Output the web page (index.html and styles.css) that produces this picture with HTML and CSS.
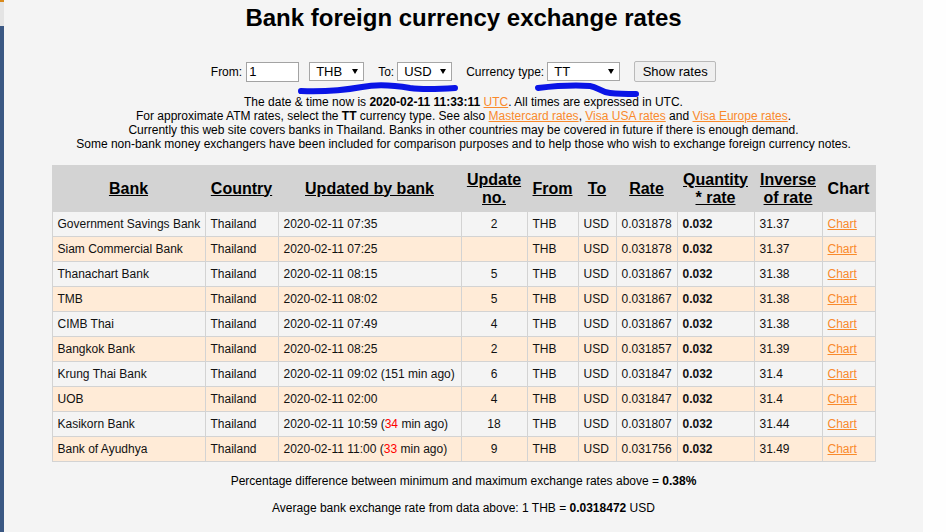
FILE: index.html
```html
<!DOCTYPE html>
<html>
<head>
<meta charset="utf-8">
<title>Bank foreign currency exchange rates</title>
<link rel="stylesheet" href="styles.css">
</head>
<body>
<div class="frame">
  <div class="side"><div class="side-tab"></div></div>
  <main class="page">
    <h1 class="title">Bank foreign currency exchange rates</h1>
    <form class="controls">
      <label class="lbl">From:</label>
      <input class="amount" type="text" value="1">
      <span class="sel sel-thb"><select><option>THB</option></select></span>
      <label class="lbl lbl-to">To:</label>
      <span class="sel sel-usd"><select><option>USD</option></select></span>
      <label class="lbl lbl-type">Currency type:</label>
      <span class="sel sel-tt"><select><option>TT</option></select></span>
      <button class="btn" type="button">Show rates</button>
    </form>
    <svg class="scribble" viewBox="4 0 919 120" width="919" height="120">
      <path d="M301 91 C 325 92, 345 90, 362 87 C 378 84, 392 85, 410 88 C 425 90, 440 89, 455 88" />
      <path d="M538 88 C 555 86, 575 85, 590 86 C 598 87, 600 92, 610 93 C 620 94, 628 94, 636 94" />
    </svg>
    <div class="notes">
      <p>The date &amp; time now is <b>2020-02-11 11:33:11</b> <a href="#">UTC</a>. All times are expressed in UTC.</p>
      <p>For approximate ATM rates, select the <b>TT</b> currency type. See also <a href="#">Mastercard rates</a>, <a href="#">Visa USA rates</a> and <a href="#">Visa Europe rates</a>.</p>
      <p>Currently this web site covers banks in Thailand. Banks in other countries may be covered in future if there is enough demand.</p>
      <p>Some non-bank money exchangers have been included for comparison purposes and to help those who wish to exchange foreign currency notes.</p>
    </div>
    <table class="rates">
      <colgroup>
        <col class="c-bank"><col class="c-country"><col class="c-updated"><col class="c-no"><col class="c-from"><col class="c-to"><col class="c-rate"><col class="c-qty"><col class="c-inv"><col class="c-chart">
      </colgroup>
      <thead>
        <tr>
          <th><a href="#">Bank</a></th>
          <th><a href="#">Country</a></th>
          <th><a href="#">Updated by bank</a></th>
          <th><a href="#">Update no.</a></th>
          <th><a href="#">From</a></th>
          <th><a href="#">To</a></th>
          <th><a href="#">Rate</a></th>
          <th><a href="#">Quantity * rate</a></th>
          <th><a href="#">Inverse of rate</a></th>
          <th>Chart</th>
        </tr>
      </thead>
      <tbody>
        <tr><td>Government Savings Bank</td><td>Thailand</td><td>2020-02-11 07:35</td><td class="num">2</td><td>THB</td><td>USD</td><td>0.031878</td><td class="qty">0.032</td><td>31.37</td><td><a href="#">Chart</a></td></tr>
        <tr><td>Siam Commercial Bank</td><td>Thailand</td><td>2020-02-11 07:25</td><td class="num"></td><td>THB</td><td>USD</td><td>0.031878</td><td class="qty">0.032</td><td>31.37</td><td><a href="#">Chart</a></td></tr>
        <tr><td>Thanachart Bank</td><td>Thailand</td><td>2020-02-11 08:15</td><td class="num">5</td><td>THB</td><td>USD</td><td>0.031867</td><td class="qty">0.032</td><td>31.38</td><td><a href="#">Chart</a></td></tr>
        <tr><td>TMB</td><td>Thailand</td><td>2020-02-11 08:02</td><td class="num">5</td><td>THB</td><td>USD</td><td>0.031867</td><td class="qty">0.032</td><td>31.38</td><td><a href="#">Chart</a></td></tr>
        <tr><td>CIMB Thai</td><td>Thailand</td><td>2020-02-11 07:49</td><td class="num">4</td><td>THB</td><td>USD</td><td>0.031867</td><td class="qty">0.032</td><td>31.38</td><td><a href="#">Chart</a></td></tr>
        <tr><td>Bangkok Bank</td><td>Thailand</td><td>2020-02-11 08:25</td><td class="num">2</td><td>THB</td><td>USD</td><td>0.031857</td><td class="qty">0.032</td><td>31.39</td><td><a href="#">Chart</a></td></tr>
        <tr><td>Krung Thai Bank</td><td>Thailand</td><td>2020-02-11 09:02 (151 min ago)</td><td class="num">6</td><td>THB</td><td>USD</td><td>0.031847</td><td class="qty">0.032</td><td>31.4</td><td><a href="#">Chart</a></td></tr>
        <tr><td>UOB</td><td>Thailand</td><td>2020-02-11 02:00</td><td class="num">4</td><td>THB</td><td>USD</td><td>0.031847</td><td class="qty">0.032</td><td>31.4</td><td><a href="#">Chart</a></td></tr>
        <tr><td>Kasikorn Bank</td><td>Thailand</td><td>2020-02-11 10:59 (<span class="recent">34</span> min ago)</td><td class="num">18</td><td>THB</td><td>USD</td><td>0.031807</td><td class="qty">0.032</td><td>31.44</td><td><a href="#">Chart</a></td></tr>
        <tr><td>Bank of Ayudhya</td><td>Thailand</td><td>2020-02-11 11:00 (<span class="recent">33</span> min ago)</td><td class="num">9</td><td>THB</td><td>USD</td><td>0.031756</td><td class="qty">0.032</td><td>31.49</td><td><a href="#">Chart</a></td></tr>
      </tbody>
    </table>
    <p class="summary">Percentage difference between minimum and maximum exchange rates above = <b>0.38%</b></p>
    <p class="summary summary-avg">Average bank exchange rate from data above: 1 THB = <b>0.0318472</b> USD</p>
  </main>
  <div class="gutter"></div>
</div>
</body>
</html>
```
FILE: styles.css
```css
html, body {
  margin: 0;
  padding: 0;
  height: 100%;
}
body {
  background: #fefefe;
  font-family: "Liberation Sans", Arial, sans-serif;
  color: #000;
}
.frame {
  display: flex;
  height: 532px;
  overflow: hidden;
}
.side {
  width: 4px;
  display: flex;
  flex-direction: column;
  background: #3b5883;
}
.side-tab {
  height: 24px;
  border-top: 2px solid #d98a1c;
  background: #e4e4e4;
}
.page {
  width: 919px;
  flex: none;
  background: #f4f4f4;
  position: relative;
  display: flex;
  flex-direction: column;
  align-items: center;
}
.gutter {
  flex: 1;
  background: #fefefe;
}
.title {
  font-size: 24px;
  line-height: 28px;
  margin: 4px 0 0;
  font-weight: bold;
}
.controls {
  display: flex;
  align-items: center;
  margin-top: 29px;
  height: 21px;
  font-size: 12px;
}
.lbl {
  margin-right: 4px;
}
.lbl-to {
  margin-left: 14px;
  margin-right: 3px;
}
.lbl-type {
  margin-left: 14px;
  margin-right: 3px;
}
.amount {
  width: 53px;
  height: 20px;
  box-sizing: border-box;
  border: 1px solid #a3a3a3;
  background: #fff;
  padding: 0 2px;
  margin: 0;
  font: 13px "Liberation Sans", Arial, sans-serif;
}
.sel {
  position: relative;
  display: inline-block;
}
.sel-thb {
  margin-left: 10px;
}
.sel::after {
  content: "";
  position: absolute;
  right: 6px;
  top: 7px;
  border-left: 3px solid transparent;
  border-right: 3px solid transparent;
  border-top: 5px solid #000;
  pointer-events: none;
}
.sel select {
  -webkit-appearance: none;
  appearance: none;
  display: block;
  height: 19px;
  box-sizing: border-box;
  border: 1px solid #a6a6a6;
  border-radius: 0;
  background: #fff;
  margin: 0;
  padding: 0 0 0 6px;
  font: 13px "Liberation Sans", Arial, sans-serif;
  color: #000;
}
.sel-thb select,
.sel-usd select {
  width: 55px;
}
.sel-tt select {
  width: 73px;
}
.btn {
  margin: 0 0 0 14px;
  height: 21px;
  width: 82px;
  box-sizing: border-box;
  border: 1px solid #b9b9b9;
  border-radius: 2px;
  background: #efefef;
  padding: 0;
  font: 13px "Liberation Sans", Arial, sans-serif;
  color: #000;
}
.scribble {
  position: absolute;
  left: 0;
  top: 0;
  pointer-events: none;
}
.scribble path {
  fill: none;
  stroke: #0a14e6;
  stroke-width: 6;
  stroke-linecap: round;
  stroke-linejoin: round;
}
.notes {
  margin-top: 13px;
  font-size: 12px;
  line-height: 14px;
  text-align: center;
}
.notes p {
  margin: 0;
}
a {
  color: #f98a2c;
}
.rates {
  margin-top: 14px;
  width: 823px;
  table-layout: fixed;
  border-collapse: collapse;
  border: 1px solid #d3d3d3;
  font-size: 12px;
}
.c-bank { width: 153px; }
.c-country { width: 73px; }
.c-updated { width: 183px; }
.c-no { width: 66px; }
.c-from { width: 51px; }
.c-to { width: 38px; }
.c-rate { width: 61px; }
.c-qty { width: 77px; }
.c-inv { width: 68px; }
.c-chart { width: 53px; }
.rates th {
  background: #d3d3d3;
  border: 1px solid #d3d3d3;
  font-size: 16px;
  line-height: 18px;
  font-weight: bold;
  height: 45px;
  padding: 0 4px;
  text-align: center;
  color: #000;
}
.rates th a {
  color: #000;
  text-decoration: underline;
}
.rates td {
  border: 1px solid #d3d3d3;
  height: 24px;
  padding: 0 5px;
  color: #111;
  white-space: nowrap;
  background: #f4f4f4;
}
.rates tbody tr:nth-child(even) td {
  background: #ffebd7;
}
.rates td.num {
  text-align: center;
}
.rates td.qty {
  font-weight: bold;
}
.recent {
  color: #f00;
}
.summary {
  margin: 12px 0 0;
  font-size: 12px;
  line-height: 14px;
  text-align: center;
}
.summary-avg {
  margin-top: 13px;
}
```
